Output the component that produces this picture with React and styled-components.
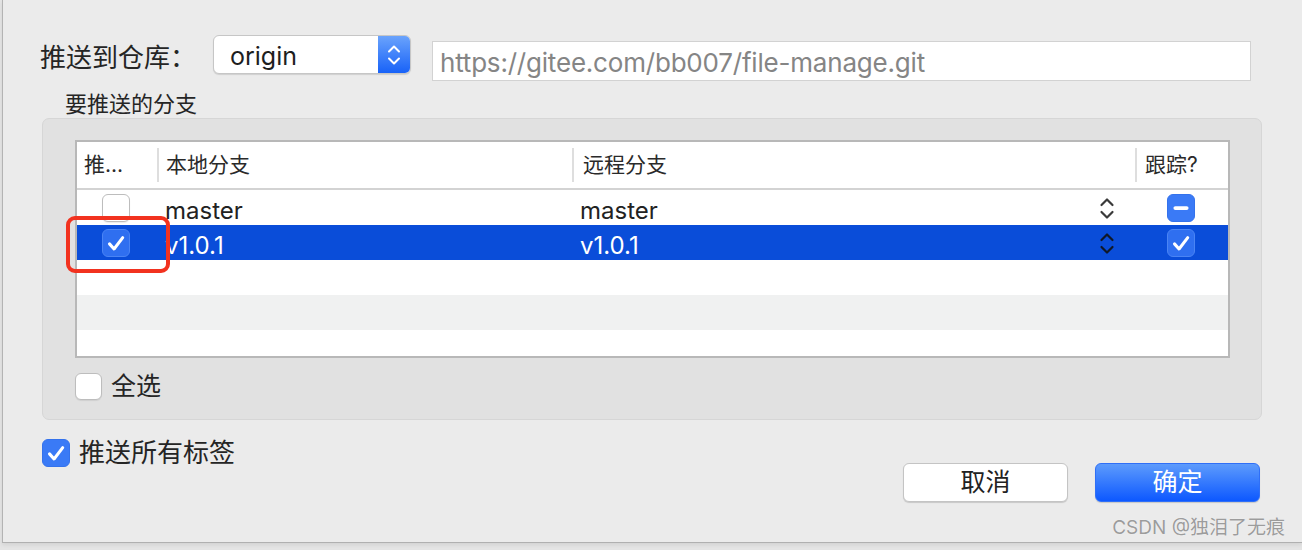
import React from 'react';
import styled, { createGlobalStyle } from 'styled-components';

const GlobalStyle = createGlobalStyle`
  html, body {
    margin: 0;
    padding: 0;
    background: #e4e4e4;
  }
  body {
    font-family: Inter, "Noto Sans CJK SC", sans-serif;
    color: #222;
  }
`;

const Page = styled.div`
  width: 1302px;
  height: 550px;
  overflow: hidden;
  padding-left: 2px;
  box-sizing: border-box;
`;

const Window = styled.div`
  position: relative;
  height: 543px;
  box-sizing: border-box;
  background: #ebebeb;
  border-left: 1px solid #b3b3b3;
  border-bottom: 1px solid #b0b0b0;
  box-shadow: 0 2px 4px rgba(0, 0, 0, 0.08);
  padding: 35px 42px 0 37px;
`;

const RepoRow = styled.div`
  display: flex;
  align-items: flex-start;
  height: 46px;
`;

const RepoLabel = styled.div`
  width: 173px;
  margin-top: 3px;
  font-size: 26px;
  line-height: 40px;
  color: #252525;
`;

const Select = styled.div`
  display: flex;
  width: 198px;
  height: 39px;
  box-sizing: border-box;
  border: 1px solid #c6c6c6;
  border-radius: 6px;
  background: #fff;
  box-shadow: 0 1px 1px rgba(0, 0, 0, 0.12);
  overflow: hidden;
`;

const SelectValue = styled.div`
  flex: 1;
  padding: 2px 0 0 16px;
  font-size: 25px;
  line-height: 36px;
  color: #1e1e1e;
`;

const SelectArrow = styled.div`
  width: 32px;
  display: flex;
  align-items: center;
  justify-content: center;
  background: linear-gradient(#6aa3fc, #1862f8);
`;

const UrlInput = styled.div`
  margin-left: 21px;
  margin-top: 6px;
  width: 819px;
  height: 40px;
  box-sizing: border-box;
  border: 1px solid #d2d2d2;
  background: #fff;
  padding: 3px 0 0 7px;
  font-size: 26px;
  line-height: 35px;
  color: #858585;
  letter-spacing: -0.2px;
  white-space: nowrap;
`;

const SectionTitle = styled.div`
  margin: 11px 0 0 25px;
  font-size: 22px;
  line-height: 24px;
  color: #252525;
`;

const GroupBox = styled.div`
  margin: 2px 0 0 2px;
  width: 1220px;
  height: 302px;
  box-sizing: border-box;
  background: #e1e1e1;
  border: 1px solid #d6d6d6;
  border-radius: 7px;
  padding: 21px 0 0 32px;
`;

const TableWrap = styled.div`
  position: relative;
  width: 1155px;
`;

const Table = styled.div`
  height: 218px;
  box-sizing: border-box;
  border: 2px solid #b8b8b8;
  background: #fff;
  overflow: hidden;
`;

const columns = '80px 415px 563px 1fr';

const HeaderRow = styled.div`
  display: grid;
  grid-template-columns: ${columns};
  height: 48px;
  box-sizing: border-box;
  border-bottom: 2px solid #d3d3d3;
`;

const HeaderCell = styled.div`
  position: relative;
  padding-left: ${p => p.$pad}px;
  font-size: 21px;
  line-height: 46px;
  color: #2a2a2a;
  white-space: nowrap;

  &::before {
    content: '';
    display: ${p => (p.$divider ? 'block' : 'none')};
    position: absolute;
    left: 0;
    top: 6px;
    bottom: 6px;
    width: 2px;
    background: #dedede;
  }
`;

const BodyRow = styled.div`
  display: grid;
  grid-template-columns: ${columns};
  height: 35px;
  background: ${p => (p.$selected ? '#0a4dd9' : p.$stripe ? '#f0f1f1' : '#fff')};
  color: ${p => (p.$selected ? '#fff' : '#222')};
`;

const Cell = styled.div`
  display: flex;
  align-items: center;
  justify-content: ${p => (p.$spread ? 'space-between' : 'flex-start')};
  padding-left: ${p => p.$pad}px;
  padding-right: ${p => (p.$spread ? 20 : 0)}px;
  font-size: 24px;
`;

const CellText = styled.span`
  padding-top: 5px;
`;

const Highlight = styled.div`
  position: absolute;
  left: -9px;
  top: 76px;
  width: 104px;
  height: 57px;
  box-sizing: border-box;
  border: 4.5px solid #f2321f;
  border-radius: 9px;
  pointer-events: none;
`;

const Option = styled.div`
  display: flex;
  align-items: center;
  gap: ${p => p.$gap}px;
  margin-top: ${p => p.$top}px;
  font-size: ${p => p.$size}px;
  line-height: 30px;
  color: #252525;
`;

const Box = styled.span`
  display: inline-flex;
  align-items: center;
  justify-content: center;
  flex: none;
  width: ${p => p.$size}px;
  height: ${p => p.$size}px;
  box-sizing: border-box;
  border-radius: 6px;
  background: ${p => (p.$on ? (p.$onDark ? '#2f6ff0' : '#3a7af6') : '#fff')};
  border: 1px solid ${p => (p.$on ? (p.$onDark ? '#4a84f4' : '#3472ec') : '#bdbdbd')};
  box-shadow: ${p => (p.$on ? 'none' : '0 1px 1px rgba(0,0,0,0.08)')};
`;

const Footer = styled.div`
  display: flex;
  align-items: flex-start;
  margin: 18px 0 0 2px;
`;

const Buttons = styled.div`
  display: flex;
  gap: 27px;
  margin-left: auto;
  margin-top: 25px;
`;

const Button = styled.div`
  width: 165px;
  height: 39px;
  box-sizing: border-box;
  border-radius: 6px;
  text-align: center;
  font-size: 25px;
  line-height: 37px;
  background: ${p => (p.$primary ? 'linear-gradient(#5d9bfc, #0d58ff)' : '#fff')};
  color: ${p => (p.$primary ? '#fff' : '#222')};
  border: 1px solid ${p => (p.$primary ? '#2f6ff7' : '#c4c4c4')};
  box-shadow: 0 1px 1px rgba(0, 0, 0, 0.15);
`;

const Watermark = styled.div`
  position: absolute;
  right: 17px;
  bottom: 3px;
  font-size: 19px;
  color: #9c9c9c;
  text-shadow: 0 0 1px #fff;
`;

const Check = ({ size = 28, on, mixed, dark }) => (
  <Box $size={size} $on={on || mixed} $onDark={dark}>
    {on && (
      <svg width={size - 2} height={size - 2} viewBox="0 0 24 24">
        <path d="M6 12.8l4.2 4.7L18.2 7" fill="none" stroke="#fff" strokeWidth="2.8" strokeLinecap="round" strokeLinejoin="round" />
      </svg>
    )}
    {mixed && (
      <svg width={size - 2} height={size - 2} viewBox="0 0 24 24">
        <rect x="5" y="10.3" width="14" height="3.6" rx="1.8" fill="#fff" />
      </svg>
    )}
  </Box>
);

const Stepper = ({ color }) => (
  <svg width="16" height="26" viewBox="0 0 16 26">
    <path d="M2.5 10L8 4.5L13.5 10" fill="none" stroke={color} strokeWidth="2.2" strokeLinecap="round" strokeLinejoin="round" />
    <path d="M2.5 17L8 22.5L13.5 17" fill="none" stroke={color} strokeWidth="2.2" strokeLinecap="round" strokeLinejoin="round" />
  </svg>
);

const branches = [
  { local: 'master', remote: 'master', push: false, track: 'mixed' },
  { local: 'v1.0.1', remote: 'v1.0.1', push: true, track: 'on', selected: true },
  null,
  null,
  null,
];

export default function App() {
  return (
    <>
      <GlobalStyle />
      <Page>
        <Window>
          <RepoRow>
            <RepoLabel>推送到仓库：</RepoLabel>
            <Select>
              <SelectValue>origin</SelectValue>
              <SelectArrow>
                <svg width="14" height="26" viewBox="0 0 14 26">
                  <path d="M2 9.5L7 4.5L12 9.5" fill="none" stroke="#fff" strokeWidth="2" strokeLinecap="round" strokeLinejoin="round" />
                  <path d="M2 16.5L7 21.5L12 16.5" fill="none" stroke="#fff" strokeWidth="2" strokeLinecap="round" strokeLinejoin="round" />
                </svg>
              </SelectArrow>
            </Select>
            <UrlInput>https://gitee.com/bb007/file-manage.git</UrlInput>
          </RepoRow>

          <SectionTitle>要推送的分支</SectionTitle>

          <GroupBox>
            <TableWrap>
              <Table>
                <HeaderRow>
                  <HeaderCell $pad={7}>推...</HeaderCell>
                  <HeaderCell $pad={9} $divider>本地分支</HeaderCell>
                  <HeaderCell $pad={11} $divider>远程分支</HeaderCell>
                  <HeaderCell $pad={10} $divider>跟踪?</HeaderCell>
                </HeaderRow>
                {branches.map((b, i) => (
                  <BodyRow key={i} $selected={b?.selected} $stripe={i % 2 === 1}>
                    {b ? (
                      <>
                        <Cell $pad={25}>
                          <Check on={b.push} dark={b.selected} />
                        </Cell>
                        <Cell $pad={8}>
                          <CellText>{b.local}</CellText>
                        </Cell>
                        <Cell $pad={8} $spread>
                          <CellText>{b.remote}</CellText>
                          <Stepper color={b.selected ? '#101828' : '#3a3a3a'} />
                        </Cell>
                        <Cell $pad={32}>
                          <Check on={b.track === 'on'} mixed={b.track === 'mixed'} dark={b.selected} />
                        </Cell>
                      </>
                    ) : null}
                  </BodyRow>
                ))}
              </Table>
              <Highlight />
            </TableWrap>

            <Option $gap={9} $top={13} $size={25}>
              <Check size={27} />
              全选
            </Option>
          </GroupBox>

          <Footer>
            <Option $gap={9} $top={0} $size={26}>
              <Check size={28} on />
              推送所有标签
            </Option>
            <Buttons>
              <Button>取消</Button>
              <Button $primary>确定</Button>
            </Buttons>
          </Footer>

          <Watermark>CSDN @独泪了无痕</Watermark>
        </Window>
      </Page>
    </>
  );
}
